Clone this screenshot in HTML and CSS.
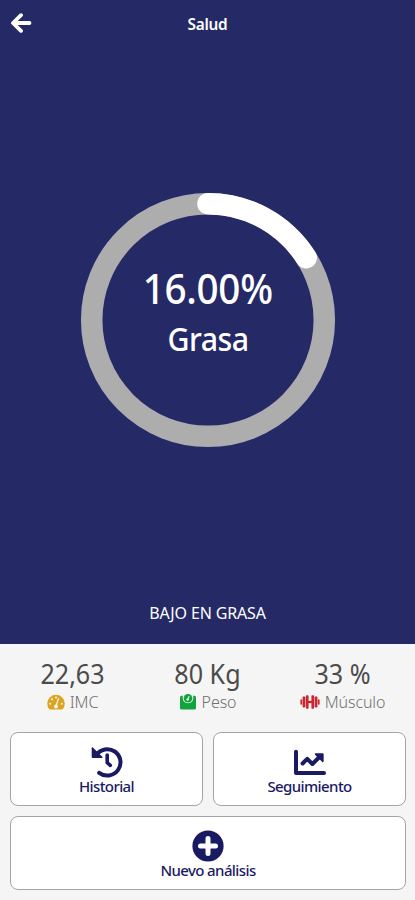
FILE: index.html
```
<!DOCTYPE html>
<html lang="es">
<head>
  <meta charset="utf-8">
  <meta name="viewport" content="width=device-width, initial-scale=1">
  <title>Salud</title>
  <link rel="stylesheet" href="styles.css">
</head>
<body>

<div class="header">
  <svg class="back" viewBox="0 0 22 20">
    <path d="M11 2.2 L3 10 L11 17.8 M3.5 10 H19.5"/>
  </svg>
  <h1>Salud</h1>
</div>

<div class="summary">
  <div class="gauge">
    <svg class="ring" viewBox="0 0 256 256">
      <circle class="track" cx="128" cy="128" r="116.3"/>
      <circle class="progress" cx="128" cy="128" r="116.3" pathLength="100" transform="rotate(-90 128 128)"/>
    </svg>
    <div class="value">16.00%</div>
    <div class="name">Grasa</div>
  </div>
  <p class="status">BAJO EN GRASA</p>
</div>

<div class="stats">
  <div class="stat">
    <div class="number">22,63</div>
    <div class="label">
      <svg class="icon" viewBox="0 0 18 16">
        <path fill="#dda41f" d="M2.2 15 A8.7 8.7 0 1 1 15.8 15 Q15.4 15.4 14.8 15.4 H3.2 Q2.6 15.4 2.2 15 Z"/>
        <g fill="#f5f5f5">
          <circle cx="3.2" cy="9.8" r="1"/>
          <circle cx="5" cy="5.2" r="1"/>
          <circle cx="9" cy="3.4" r="1"/>
          <circle cx="14.8" cy="9.8" r="1"/>
          <circle cx="9" cy="12.6" r="2"/>
        </g>
        <path stroke="#f5f5f5" stroke-width="1.3" stroke-linecap="round" d="M9 12 L11.4 4.8"/>
      </svg>
      <span>IMC</span>
    </div>
  </div>
  <div class="stat">
    <div class="number">80 Kg</div>
    <div class="label">
      <svg class="icon" viewBox="0 0 18 16">
        <path fill="#12a33c" d="M2.5 1.8 H3.9 A5.5 5.5 0 0 0 9 9.3 A5.5 5.5 0 0 0 14.1 1.8 H15.5 Q17 1.8 17 3.3 V14 Q17 15.5 15.5 15.5 H2.5 Q1 15.5 1 14 V3.3 Q1 1.8 2.5 1.8 Z"/>
        <circle fill="#12a33c" cx="9" cy="4.2" r="4.3"/>
        <path fill="none" stroke="#f5f5f5" stroke-width="1.1" stroke-linecap="round" d="M8.6 5.7 L10 2.5"/>
        <circle fill="#f5f5f5" cx="8.6" cy="5.6" r="1.2"/>
      </svg>
      <span>Peso</span>
    </div>
  </div>
  <div class="stat">
    <div class="number">33 %</div>
    <div class="label">
      <svg class="icon wide" viewBox="0 0 20 16">
        <g fill="#cb2530">
          <rect x="0.4" y="5.2" width="1.8" height="5.6" rx=".8"/>
          <rect x="2.6" y="2.5" width="2.8" height="11" rx=".8"/>
          <rect x="6" y="1.2" width="2.6" height="13.6" rx=".8"/>
          <rect x="8" y="6.9" width="4" height="2.2"/>
          <rect x="11.4" y="1.2" width="2.6" height="13.6" rx=".8"/>
          <rect x="14.6" y="2.5" width="2.8" height="11" rx=".8"/>
          <rect x="17.8" y="5.2" width="1.8" height="5.6" rx=".8"/>
        </g>
      </svg>
      <span>Músculo</span>
    </div>
  </div>
</div>

<div class="actions">
  <button type="button" class="card">
    <svg class="action-icon" viewBox="0 0 32 32">
      <path class="line" d="M5.2 9.2 A13.2 13.2 0 1 1 8.2 26.8"/>
      <path class="fill" d="M1.6 1.3 Q.7 1.3 .7 2.3 V11 Q.7 12 1.7 12 H10.7 Q12.2 12 11.3 10.8 Z"/>
      <path class="line hands" d="M16.2 9 V16.7 L19.3 19.4"/>
    </svg>
    <span>Historial</span>
  </button>
  <button type="button" class="card">
    <svg class="action-icon" viewBox="0 0 32 32">
      <path class="line axis" d="M2 5.8 V27 H30"/>
      <path class="line trend" d="M8.6 17.5 L13.2 12.8 L18.4 18 L26.5 10"/>
      <path class="fill" d="M21.5 7.3 H28.6 Q29.6 7.3 29.6 8.3 V15.5 Q29.3 16.7 28.3 16 L21 8.8 Q20.3 7.5 21.5 7.3 Z"/>
    </svg>
    <span>Seguimiento</span>
  </button>
  <button type="button" class="card full">
    <svg class="action-icon" viewBox="0 0 32 32">
      <circle class="fill" cx="16" cy="16" r="15.6"/>
      <path class="plus" d="M16 8.5 V23.5 M8.5 16 H23.5"/>
    </svg>
    <span>Nuevo análisis</span>
  </button>
</div>

</body>
</html>
```
FILE: styles.css
```
* {
  box-sizing: border-box;
}

body {
  margin: 0;
  height: 900px;
  display: flex;
  flex-direction: column;
  overflow: hidden;
  background: #f5f5f5;
  font-family: "Noto Sans", "Open Sans", sans-serif;
}

/* Header */
.header {
  height: 48px;
  display: grid;
  grid-template-columns: 40px 1fr 40px;
  align-items: center;
  background: #252a67;
  color: white;
}

.back {
  width: 22px;
  height: 20px;
  margin: -3px 0 0 10px;
  fill: none;
  stroke: white;
  stroke-width: 3.8;
  stroke-linecap: round;
  stroke-linejoin: round;
}

.header h1 {
  margin: 0;
  text-align: center;
  font-size: 16.5px;
  line-height: 24px;
  font-weight: 600;
  letter-spacing: -0.3px;
  transform: scaleX(.93);
}

/* Body fat gauge */
.summary {
  height: 596px;
  padding-top: 144px;
  display: flex;
  flex-direction: column;
  align-items: center;
  background: #252a67;
  color: white;
}

.gauge {
  width: 256px;
  height: 256px;
  margin-left: 1px;
  display: grid;
  grid-template-rows: 69px 54px 48px;
  justify-items: center;
  align-items: center;
}

.ring {
  grid-column: 1;
  grid-row: 1;
  align-self: start;
  width: 256px;
  height: 256px;
  margin-bottom: -187px;
  fill: none;
  stroke-width: 21.5;
}

.track {
  stroke: #adadad;
}

.progress {
  stroke: white;
  stroke-linecap: round;
  stroke-dasharray: 16 100;
}

/* text is slightly condensed */
.value {
  grid-column: 1;
  grid-row: 2;
  font-size: 42px;
  line-height: 54px;
  font-weight: 500;
  letter-spacing: -0.3px;
  transform: scaleX(.92);
}

.name {
  grid-column: 1;
  grid-row: 3;
  font-size: 33px;
  line-height: 48px;
  font-weight: 500;
  letter-spacing: -0.6px;
  transform: scaleX(.92);
}

.status {
  margin: 153px 0 0;
  font-size: 16px;
  line-height: 24px;
  letter-spacing: -0.15px;
}

/* Measurements */
.stats {
  height: 88px;
  padding: 12px 5px 0;
  display: grid;
  grid-template-columns: repeat(3, 1fr);
  text-align: center;
}

.number {
  font-size: 27px;
  line-height: 36px;
  color: #4b4b4b;
  transform: scaleX(.93);
}

.label {
  display: flex;
  justify-content: center;
  align-items: center;
  gap: 5px;
  font-size: 16px;
  line-height: 20px;
  font-weight: 300;
  letter-spacing: -0.1px;
  color: #707070;
}

.icon {
  width: 18px;
  height: 16px;
}

.icon.wide {
  width: 20px;
}

/* Action buttons */
.actions {
  padding: 0 9px 0 10px;
  display: grid;
  grid-template-columns: 1fr 1fr;
  grid-auto-rows: 74px;
  gap: 10px;
}

.card {
  padding: 13px 0 0;
  display: flex;
  flex-direction: column;
  align-items: center;
  background: white;
  border: 1.5px solid #a3a3ab;
  border-radius: 8px;
  color: #1a1a62;
  font-family: inherit;
  font-size: 15px;
  line-height: 20px;
  font-weight: 500;
  letter-spacing: -0.6px;
}

.card.full {
  grid-column: 1 / 3;
}

.action-icon {
  width: 32px;
  height: 32px;
  flex: none;
}

.card span {
  margin-top: -2px;
}

.fill {
  fill: #1a1a62;
}

.line {
  fill: none;
  stroke: #1a1a62;
  stroke-width: 4;
  stroke-linecap: round;
  stroke-linejoin: round;
}

.hands {
  stroke-width: 3.6;
}

.plus {
  stroke: white;
  stroke-width: 5;
  stroke-linecap: round;
}
```
